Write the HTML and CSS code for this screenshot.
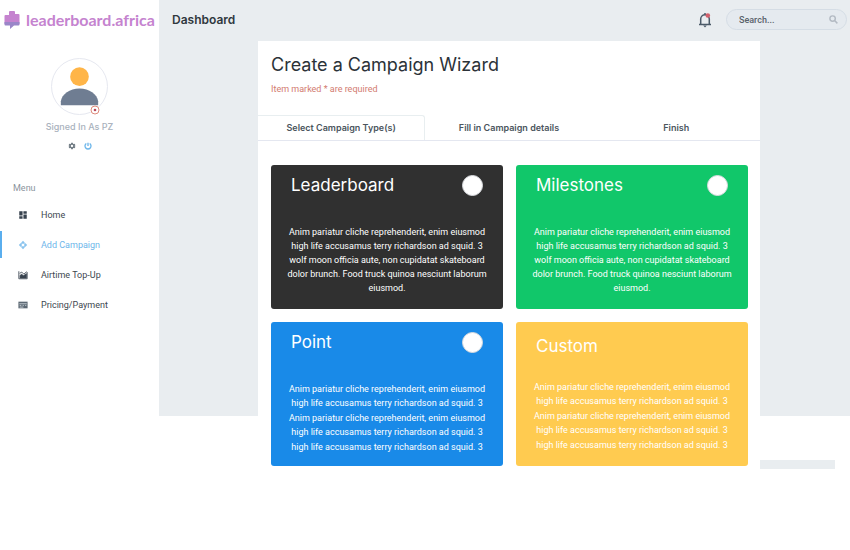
FILE: index.html
```html
<!DOCTYPE html>
<html lang="en">
<head>
<meta charset="utf-8">
<title>Dashboard - leaderboard.africa</title>
<link rel="stylesheet" href="styles.css">
</head>
<body>
<div class="app">
  <aside class="sidebar">
    <a class="logo" href="#">
      <svg viewBox="0 0 16 20" aria-hidden="true">
        <path fill="#c583cf" d="M6 1h4a1 1 0 0 1 1 1v2h3.500a1 1 0 0 1 1 1v9h-15V6a1 1 0 0 1 1-1H5V2a1 1 0 0 1 1-1z"/>
        <path fill="#9a86c8" d="M.5 12h15v2.500a1 1 0 0 1-1 1H10L6 19v-3.500H1.500a1 1 0 0 1-1-1z"/>
      </svg>
      <span>leaderboard.africa</span>
    </a>
    <div class="profile">
      <div class="avatar">
        <svg class="person" viewBox="0 0 56 56" aria-hidden="true">
          <circle cx="28" cy="18" r="9.500" fill="#ffb548"/>
          <path fill="#6f7d92" d="M9 47v-4c1-7 9-13 19-13s18 6 19 13v4z"/>
        </svg>
        <svg class="status" viewBox="0 0 10 10" aria-hidden="true">
          <circle cx="5" cy="5" r="4" fill="#fff" stroke="#df8b7c"/>
          <circle cx="5" cy="5" r="1.300" fill="#b9485a"/>
        </svg>
      </div>
      <div class="signed">Signed In As PZ</div>
      <div class="actions">
        <button type="button" aria-label="Settings">
          <svg viewBox="0 0 24 24" fill="#727d85"><path fill-rule="evenodd" d="M9.500 2h5l.6 3 1.900 1.100 2.900-1 2.500 4.300L20.100 11.400v1.200l2.300 2-2.500 4.300-2.900-1-1.900 1.100-.6 3h-5l-.6-3L7 17.900l-2.900 1-2.500-4.300 2.300-2v-1.200l-2.300-2 2.500-4.300 2.900 1L8.900 5zM12 8.500a3.500 3.500 0 1 0 0 7 3.500 3.500 0 0 0 0-7z"/></svg>
        </button>
        <button type="button" aria-label="Sign out">
          <svg viewBox="0 0 24 24" fill="none" stroke="#6db6ea" stroke-width="4"><path d="M7 4.500a9 9 0 1 0 10 0M12 2v10"/></svg>
        </button>
      </div>
    </div>
    <nav class="menu">
      <h2>Menu</h2>
      <a href="#">
        <svg viewBox="0 0 24 24" fill="#37424e"><path d="M3 3h8v10H3zM3 15h8v6H3zM13 3h8v6h-8zM13 11h8v10h-8z"/></svg>
        Home
      </a>
      <a class="active" href="#">
        <svg viewBox="0 0 24 24" fill="#8ac4ee"><path d="M12 2l4 4v3h-8V6zM12 22l4-4v-3h-8v3zM2 12l4-4h3v8H6zM22 12l-4-4h-3v8h3z"/></svg>
        Add Campaign
      </a>
      <a href="#">
        <svg viewBox="0 0 24 24" fill="none" stroke="#37424e" stroke-width="2"><path d="M2 3v18h20V5"/><path fill="#37424e" d="M5 19v-6l4-3 4 4 7-5v10z"/><path d="M4 8l5-3 5 5 7-6"/></svg>
        Airtime Top-Up
      </a>
      <a href="#">
        <svg viewBox="0 0 24 24"><path fill="#5c6873" d="M1 4h22v16H1z"/><path stroke="#cfd6dc" stroke-width="2" d="M3 9h18M4 13h4M11 13h3M17 13h3M4 17h9"/></svg>
        Pricing/Payment
      </a>
    </nav>
  </aside>

  <main class="main">
    <header class="topbar">
      <h1>Dashboard</h1>
      <button class="bell" type="button" aria-label="Notifications">
        <svg viewBox="0 0 14 16" fill="none"><path stroke="#4b5a68" stroke-width="1.500" d="M1 12.500h12M2.700 12V7a4.300 4.300 0 0 1 8.600 0v5M7 1v2"/><path fill="#4b5a68" d="M5.200 13.500h3.600L7 15.500z"/><circle cx="9.800" cy="3.500" r="2.300" fill="#d2606c"/></svg>
      </button>
      <label class="search">
        <input type="text" placeholder="Search..." aria-label="Search">
        <svg viewBox="0 0 10 10" fill="none" stroke="#b3bac3" stroke-width="1.600" aria-hidden="true"><circle cx="4" cy="4" r="3"/><path d="M6.200 6.200L9.300 9.300"/></svg>
      </label>
    </header>

    <div class="content">
      <section class="panel">
        <h2 class="title">Create a Campaign Wizard</h2>
        <p class="required">Item marked * are required</p>
        <div class="tabs" role="tablist">
          <button class="tab selected" type="button" role="tab" aria-selected="true">Select Campaign Type(s)</button>
          <button class="tab" type="button" role="tab" aria-selected="false">Fill in Campaign details</button>
          <button class="tab" type="button" role="tab" aria-selected="false">Finish</button>
        </div>
        <div class="cards">
          <article class="card dark">
            <div class="card-head"><label for="t1">Leaderboard</label><input type="radio" id="t1" name="type"></div>
            <p>Anim pariatur cliche reprehenderit, enim eiusmod<br>high life accusamus terry richardson ad squid. 3<br>wolf moon officia aute, non cupidatat skateboard<br>dolor brunch. Food truck quinoa nesciunt laborum<br>eiusmod.</p>
          </article>
          <article class="card green">
            <div class="card-head"><label for="t2">Milestones</label><input type="radio" id="t2" name="type"></div>
            <p>Anim pariatur cliche reprehenderit, enim eiusmod<br>high life accusamus terry richardson ad squid. 3<br>wolf moon officia aute, non cupidatat skateboard<br>dolor brunch. Food truck quinoa nesciunt laborum<br>eiusmod.</p>
          </article>
          <article class="card blue">
            <div class="card-head"><label for="t3">Point</label><input type="radio" id="t3" name="type"></div>
            <p>Anim pariatur cliche reprehenderit, enim eiusmod<br>high life accusamus terry richardson ad squid. 3</p>
            <p>Anim pariatur cliche reprehenderit, enim eiusmod<br>high life accusamus terry richardson ad squid. 3</p>
            <p>high life accusamus terry richardson ad squid. 3</p>
          </article>
          <article class="card yellow">
            <div class="card-head"><h3>Custom</h3></div>
            <p>Anim pariatur cliche reprehenderit, enim eiusmod<br>high life accusamus terry richardson ad squid. 3</p>
            <p>Anim pariatur cliche reprehenderit, enim eiusmod<br>high life accusamus terry richardson ad squid. 3</p>
            <p>high life accusamus terry richardson ad squid. 3</p>
          </article>
        </div>
      </section>
      <div class="strip"></div>
    </div>
  </main>
</div>
</body>
</html>
```

FILE: styles.css
```css
* { box-sizing: border-box; }

body {
  margin: 0;
  background: #fff;
  color: #3d474f;
  font: 9px/14px Roboto, sans-serif;
}

h1, h2, h3, p { margin: 0; }
a { color: inherit; text-decoration: none; }
button { padding: 0; border: 0; background: none; color: inherit; font: inherit; }
svg { display: block; }

.app { display: grid; grid-template-columns: 159px 1fr; }

/* Sidebar */
.logo {
  display: flex;
  align-items: center;
  gap: 6px;
  height: 40px;
  padding-left: 4px;
  color: #c583cf;
  font: 700 16px/20px Lato, sans-serif;
  white-space: nowrap;
}
.logo svg { flex: none; width: 16px; height: 20px; }

.profile { display: flex; flex-direction: column; align-items: center; padding-top: 18px; }
.avatar { position: relative; width: 57px; height: 57px; border: 1px solid #e6e8f0; border-radius: 50%; }
.person { width: 100%; height: 100%; }
.status { position: absolute; right: 7px; bottom: -1px; width: 10px; height: 10px; }
.signed { margin-top: 5px; color: #a9b2bd; font: 500 9px/14px Inter, sans-serif; }
.actions { display: flex; gap: 8px; margin-top: 8px; }
.actions svg { width: 8px; height: 8px; }

.menu { padding-top: 31px; }
.menu h2 { height: 20px; padding-left: 13px; color: #8b949d; font: 400 9px/14px Roboto, sans-serif; }
.menu a {
  display: flex;
  align-items: center;
  gap: 13px;
  height: 27px;
  margin-bottom: 3px;
  padding-left: 16px;
  border-left: 2px solid transparent;
}
.menu a svg { width: 10px; height: 10px; }
.menu .active { border-left-color: #5aaeee; color: #6db6ea; }

/* Main area */
.main { background: linear-gradient(#e9edf0, #e9edf0) no-repeat 0 0 / 100% 416px; }
.topbar { display: flex; align-items: center; height: 41px; padding: 0 3px 2px 13px; }
.topbar h1 { margin-right: auto; color: #30383e; font: 600 12px/16px Inter, sans-serif; }
.bell svg { width: 14px; height: 16px; }
.search {
  display: flex;
  align-items: center;
  width: 121px;
  height: 21px;
  margin-left: 14px;
  padding: 0 8px 0 12px;
  border: 1px solid #d5dde5;
  border-radius: 11px;
  background: #e5eaef;
}
.search input { flex: 1; min-width: 0; padding: 0; border: 0; outline: 0; background: none; font: 500 9px/14px Roboto, sans-serif; }
.search input::placeholder { color: #59636b; opacity: 1; }
.search svg { width: 9px; height: 9px; }

.content { display: flex; align-items: flex-end; padding: 0 15px 0 99px; }
.panel { flex: 1; min-width: 0; padding-bottom: 3px; background: #fff; }
.strip { width: 75px; height: 9px; background: #e9edf0; }

.title { padding: 12px 13px 0; color: #2b3238; font: 400 18px/24px Inter, sans-serif; }
.required { padding: 5px 13px 0; color: #d27b70; }

.tabs { display: grid; grid-template-columns: 1fr 1fr 1fr; margin-top: 19px; border-bottom: 1px solid #e4e7f0; }
.tab { height: 25px; border: 1px solid transparent; border-bottom: 0; color: #4b555d; font: 600 9px/14px Inter, sans-serif; }
.tab.selected { margin-bottom: -1px; border-color: #e8eef0; border-left: 0; border-radius: 0 3px 0 0; background: #fff; }

.cards { display: grid; grid-template-columns: 1fr 1fr; gap: 13px; padding: 24px 12px 0 13px; }
.card { height: 144px; border-radius: 3px; color: #fff; text-align: center; }
.card-head {
  display: flex;
  align-items: center;
  justify-content: space-between;
  height: 40px;
  margin-bottom: 20px;
  padding: 0 20px;
  font: 400 17px/24px Inter, sans-serif;
}
.card-head h3 { font: inherit; }
.card-head input { appearance: none; width: 21px; height: 21px; margin: 0; border: 1px solid #d8dade; border-radius: 50%; background: #fff; }
.card p { margin-bottom: 1px; white-space: nowrap; }
.dark { background: #303030; }
.green { background: #11c76a; }
.blue { background: #198ae8; }
.yellow { background: #ffcb50; }
.yellow .card-head { height: 48px; margin-bottom: 10px; }
```
